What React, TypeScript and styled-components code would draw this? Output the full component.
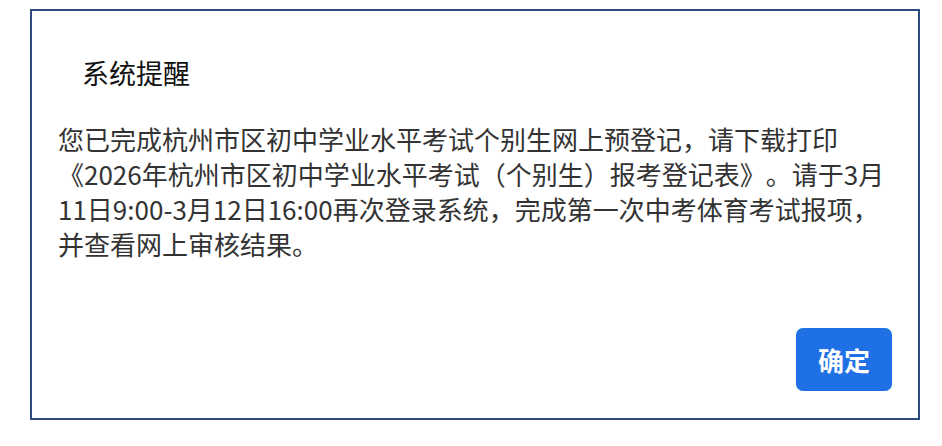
import { createGlobalStyle } from 'styled-components';
import styled from 'styled-components';

const GlobalStyle = createGlobalStyle`
  html,
  body {
    margin: 0;
    padding: 0;
    background: #ffffff;
  }
  body {
    font-family: 'Noto Sans CJK SC', 'Noto Sans', sans-serif;
  }
`;

const lines = [
  '您已完成杭州市区初中学业水平考试个别生网上预登记，请下载打印',
  '《2026年杭州市区初中学业水平考试（个别生）报考登记表》。请于3月',
  '11日9:00-3月12日16:00再次登录系统，完成第一次中考体育考试报项，',
  '并查看网上审核结果。',
];

export default function App() {
  return (
    <>
      <GlobalStyle />
      <Page>
        <Dialog>
          <Title>系统提醒</Title>
          <Message>
            {lines.map((line) => (
              <Line key={line}>{line}</Line>
            ))}
          </Message>
          <Footer>
            <ConfirmButton type="button">确定</ConfirmButton>
          </Footer>
        </Dialog>
      </Page>
    </>
  );
}

const Page = styled.div`
  width: 942px;
  height: 446px;
  padding: 9px 0 0 30px;
  box-sizing: border-box;
`;

const Dialog = styled.div`
  width: 890px;
  height: 411px;
  box-sizing: border-box;
  border: 2px solid #2c4a7e;
  background: #ffffff;
  display: flex;
  flex-direction: column;
  padding: 44px 26px 27px 26px;
`;

const Title = styled.div`
  font-size: 27px;
  line-height: 36px;
  color: #111111;
  padding-left: 24px;
`;

const Message = styled.div`
  flex: 1;
  margin-top: 30px;
  font-size: 26px;
  line-height: 35px;
  color: #333333;
  text-spacing-trim: space-all;
`;

const Line = styled.div`
  white-space: nowrap;
`;

const Footer = styled.div`
  display: flex;
  justify-content: flex-end;
`;

const ConfirmButton = styled.button`
  width: 96px;
  height: 63px;
  border: none;
  border-radius: 7px;
  background: #1f6fe5;
  color: #ffffff;
  font-family: 'Noto Sans CJK SC', 'Noto Sans', sans-serif;
  font-size: 26px;
  font-weight: 700;
  cursor: pointer;
  padding: 0;
`;
